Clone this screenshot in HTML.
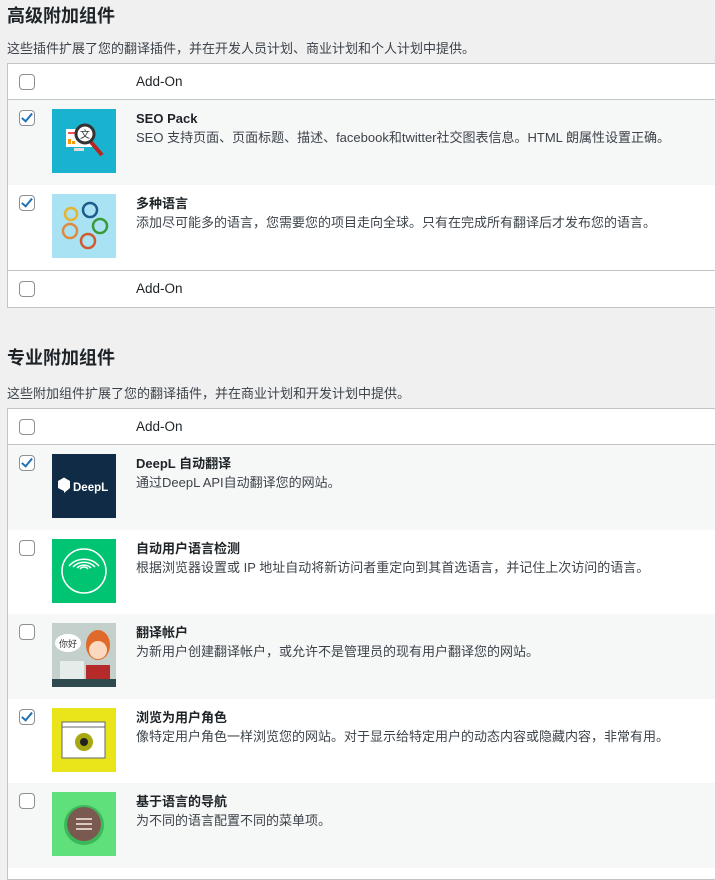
<!DOCTYPE html>
<html><head><meta charset="utf-8"><style>
body{margin:0;background:#f0f0f1;font-family:"Liberation Sans","Noto Sans CJK SC",sans-serif;color:#3c434a;width:715px;height:857px;overflow:hidden;position:relative}
h2{position:absolute;left:7px;margin:0;font-size:18px;line-height:24px;font-weight:700;color:#1d2327}
.d{position:absolute;left:7px;font-size:13px;line-height:18px;color:#3c434a}
.t{position:absolute;left:7px;width:720px;border:1px solid #c3c4c7;background:#fff}
.r{position:relative;background:#fff}
.g{background:#f6f7f7}
.h{height:36px;border-bottom:1px solid #c3c4c7;box-sizing:border-box}
.f{height:37px;border-top:1px solid #c3c4c7;box-sizing:border-box}
.cb{position:absolute;left:11px;width:14px;height:14px;border:1px solid #8c8f94;border-radius:4px;background:#fff}
.cb.c::after{content:"";position:absolute;left:4px;top:0px;width:4px;height:9px;border:solid #2271b1;border-width:0 2.5px 2.5px 0;transform:rotate(40deg)}
.h .cb,.f .cb{top:10px}
.r .lab{position:absolute;left:128px;top:9px;font-size:13.5px;line-height:18px;color:#1d2327}
.img{position:absolute;left:44px;top:9px;width:64px;height:64px}
.n{position:absolute;left:128px;top:10px;font-size:13px;line-height:18px;font-weight:700;color:#1d2327}
.x{position:absolute;left:128px;top:29px;font-size:13px;line-height:18px;color:#3c434a;white-space:nowrap}
.row{height:85px;position:relative}
.t2 .row{height:84.5px}
.row .cb{top:10px}
</style></head><body>
<h2 style="top:4px">高级附加组件</h2>
<div class="d" style="top:40px">这些插件扩展了您的翻译插件，并在开发人员计划、商业计划和个人计划中提供。</div>
<div class="t" style="top:63px">
<div class="r h"><div class="cb"></div><div class="lab">Add-On</div></div>
<div class="r row g"><div class="cb c"></div>
<svg class="img" viewBox="0 0 64 64"><rect width="64" height="64" fill="#1ab3cf"/><rect x="14" y="20" width="26" height="18" fill="#fff"/><rect x="16" y="23" width="8" height="2" fill="#e55"/><rect x="16" y="30" width="3" height="5" fill="#f90"/><rect x="20" y="32" width="3" height="3" fill="#f90"/><rect x="22" y="39" width="10" height="3" fill="#ddd"/><line x1="38" y1="32" x2="50" y2="46" stroke="#b22" stroke-width="4"/><circle cx="33" cy="25" r="9" fill="#fff" stroke="#333" stroke-width="3"/><text x="33" y="29" font-size="10" text-anchor="middle" fill="#333" font-family="Noto Sans CJK SC">文</text></svg>
<div class="n">SEO Pack</div><div class="x">SEO 支持页面、页面标题、描述、facebook和twitter社交图表信息。HTML 朗属性设置正确。</div></div>
<div class="r row"><div class="cb c"></div>
<svg class="img" viewBox="0 0 64 64" fill="none" stroke-width="2.5"><rect width="64" height="64" fill="#a9e2f3" stroke="none"/><circle cx="19" cy="20" r="6" stroke="#e8b330"/><circle cx="38" cy="16" r="7" stroke="#1b5c8a"/><circle cx="48" cy="32" r="7" stroke="#3a9a3a"/><circle cx="18" cy="37" r="7" stroke="#e08a40"/><circle cx="36" cy="47" r="7" stroke="#d05a30"/></svg>
<div class="n">多种语言</div><div class="x">添加尽可能多的语言，您需要您的项目走向全球。只有在完成所有翻译后才发布您的语言。</div></div>
<div class="r f"><div class="cb"></div><div class="lab">Add-On</div></div>
</div>

<h2 style="top:346px">专业附加组件</h2>
<div class="d" style="top:385px">这些附加组件扩展了您的翻译插件，并在商业计划和开发计划中提供。</div>
<div class="t t2" style="top:408px;height:470px">
<div class="r h"><div class="cb"></div><div class="lab">Add-On</div></div>
<div class="r row g"><div class="cb c"></div>
<svg class="img" viewBox="0 0 64 64"><rect width="64" height="64" fill="#0f2b46"/><path d="M6 27l6-3.5 6 3.5v7l-6 5v-2l-6-3z" fill="#fff"/><text x="21" y="37" font-size="11.5" font-weight="700" fill="#fff" font-family="Liberation Sans">DeepL</text></svg>
<div class="n">DeepL 自动翻译</div><div class="x">通过DeepL API自动翻译您的网站。</div></div>
<div class="r row"><div class="cb"></div>
<svg class="img" viewBox="0 0 64 64" fill="none" stroke="#fff" stroke-width="1.5"><rect width="64" height="64" fill="#00c471" stroke="none"/><circle cx="32" cy="32" r="22"/><path d="M17 27a20 20 0 0 1 30 0M21 28a15 15 0 0 1 22 0M25 29a10 10 0 0 1 14 0M28 30a5 5 0 0 1 8 0"/></svg>
<div class="n">自动用户语言检测</div><div class="x">根据浏览器设置或 IP 地址自动将新访问者重定向到其首选语言，并记住上次访问的语言。</div></div>
<div class="r row g"><div class="cb"></div>
<svg class="img" viewBox="0 0 64 64"><rect width="64" height="64" fill="#c4d0cc"/><rect y="56" width="64" height="8" fill="#2e4a4e"/><rect x="8" y="38" width="24" height="18" fill="#e5ecea"/><ellipse cx="16" cy="20" rx="13" ry="9" fill="#fff"/><text x="16" y="24" font-size="9" text-anchor="middle" fill="#333" font-family="Noto Sans CJK SC">你好</text><ellipse cx="46" cy="22" rx="12" ry="15" fill="#e06a2a"/><circle cx="46" cy="27" r="9" fill="#fbd9c0"/><rect x="34" y="42" width="24" height="14" fill="#b72a2a"/></svg>
<div class="n">翻译帐户</div><div class="x">为新用户创建翻译帐户，或允许不是管理员的现有用户翻译您的网站。</div></div>
<div class="r row"><div class="cb c"></div>
<svg class="img" viewBox="0 0 64 64"><rect width="64" height="64" fill="#e9e51a"/><rect x="10" y="14" width="43" height="36" fill="#fff" stroke="#666"/><line x1="10" y1="19" x2="53" y2="19" stroke="#666"/><circle cx="32" cy="34" r="9" fill="#a8a810"/><circle cx="32" cy="34" r="4" fill="#222"/></svg>
<div class="n">浏览为用户角色</div><div class="x">像特定用户角色一样浏览您的网站。对于显示给特定用户的动态内容或隐藏内容，非常有用。</div></div>
<div class="r row g"><div class="cb"></div>
<svg class="img" viewBox="0 0 64 64"><rect width="64" height="64" fill="#5fe07a"/><circle cx="32" cy="33" r="20" fill="#3cb85a"/><circle cx="32" cy="32" r="17" fill="#7a5a50"/><path d="M24 27h16M24 32h16M24 37h16" stroke="#d8c8c0" stroke-width="2"/></svg>
<div class="n">基于语言的导航</div><div class="x">为不同的语言配置不同的菜单项。</div></div>
</div>
</body></html>
